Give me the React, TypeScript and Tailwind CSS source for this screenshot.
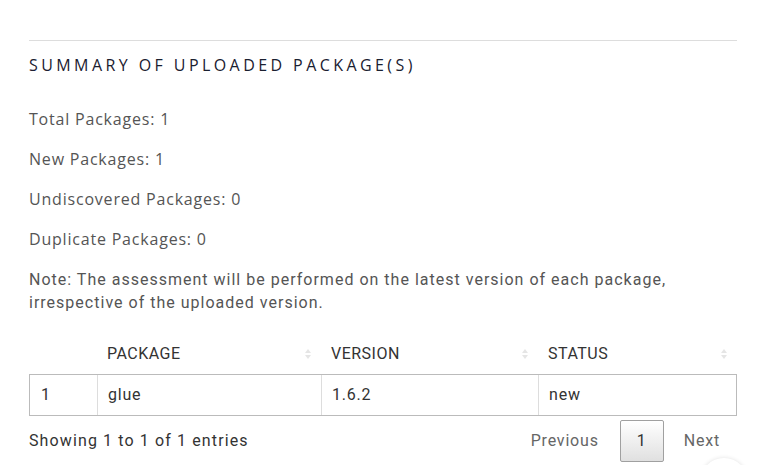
import React from "react";

const stats = [
  "Total Packages: 1",
  "New Packages: 1",
  "Undiscovered Packages: 0",
  "Duplicate Packages: 0",
];

const SortIcon: React.FC = () => (
  <svg width="6" height="12" viewBox="0 0 6 12" className="shrink-0">
    <path d="M3 1 L6 5 L0 5 Z" fill="#e5e5e5" />
    <path d="M3 11 L6 7 L0 7 Z" fill="#e5e5e5" />
  </svg>
);

const columns = [
  { label: "", w: "w-[68px]", sort: false },
  { label: "PACKAGE", w: "w-[224px]", sort: true },
  { label: "VERSION", w: "w-[217px]", sort: true },
  { label: "STATUS", w: "flex-1", sort: true },
];

const App: React.FC = () => {
  return (
    <div className="w-[759px] h-[465px] overflow-hidden bg-white px-[29px] pt-[40px] relative">
      <div className="border-t border-[#dddddd] w-[708px]" />
      {/* Heading */}
      <h2 className="mt-[14px] font-['Open_Sans',sans-serif] text-[16px] leading-[20px] tracking-[0.214em] text-[#1a2030] font-medium">
        SUMMARY OF UPLOADED PACKAGE(S)
      </h2>
      {/* Stats */}
      <div className="mt-[33px] flex flex-col gap-[18px] font-['Open_Sans',sans-serif] text-[16px] leading-[22px] tracking-[0.05em] text-[#555555]">
        {stats.map((s) => (
          <p key={s}>{s}</p>
        ))}
        <p className="font-['Roboto',sans-serif] text-[16px] leading-[23px] text-[#555555] tracking-[0.063em]">
          Note: The assessment will be performed on the latest version of each package,
          <br />
          irrespective of the uploaded version.
        </p>
      </div>
      {/* Table */}
      <div className="mt-[19px] w-[708px] font-['Roboto',sans-serif] text-[16px] tracking-[0.05em] text-[#333333]">
        <div className="flex h-[41px] items-center tracking-[0.03em]">
          {columns.map((c, i) => (
            <div
              key={i}
              className={`${c.w} h-full flex items-center justify-between pl-[10px] pr-[10px]`}
            >
              <span>{c.label}</span>
              {c.sort && <SortIcon />}
            </div>
          ))}
        </div>
        <div className="flex h-[42px] border border-[#bbbbbb] text-[#333333]">
          <div className="w-[67px] flex items-center pl-[11px]">1</div>
          <div className="w-[224px] flex items-center pl-[10px] border-l border-[#dddddd]">glue</div>
          <div className="w-[217px] flex items-center pl-[10px] border-l border-[#dddddd]">1.6.2</div>
          <div className="flex-1 flex items-center pl-[10px] border-l border-[#dddddd]">new</div>
        </div>
        {/* Footer */}
        <div className="flex items-center justify-between mt-[4px]">
          <span className="text-[#333333] tracking-[0.07em]">Showing 1 to 1 of 1 entries</span>
          <div className="flex items-center mr-[17px]">
            <span className="mr-[21px] text-[#666666]">Previous</span>
            <span className="w-[44px] h-[42px] flex items-center justify-center border border-[#a0a0a0] rounded-[2px] bg-gradient-to-b from-white to-[#e0e0e0] text-[#333333]">
              1
            </span>
            <span className="ml-[20px] text-[#666666]">Next</span>
          </div>
        </div>
      </div>
      <div className="absolute left-[700px] top-[458px] w-[48px] h-[48px] rounded-full bg-white shadow-[0_0_4px_rgba(0,0,0,0.12)]" />
    </div>
  );
};

export default App;
